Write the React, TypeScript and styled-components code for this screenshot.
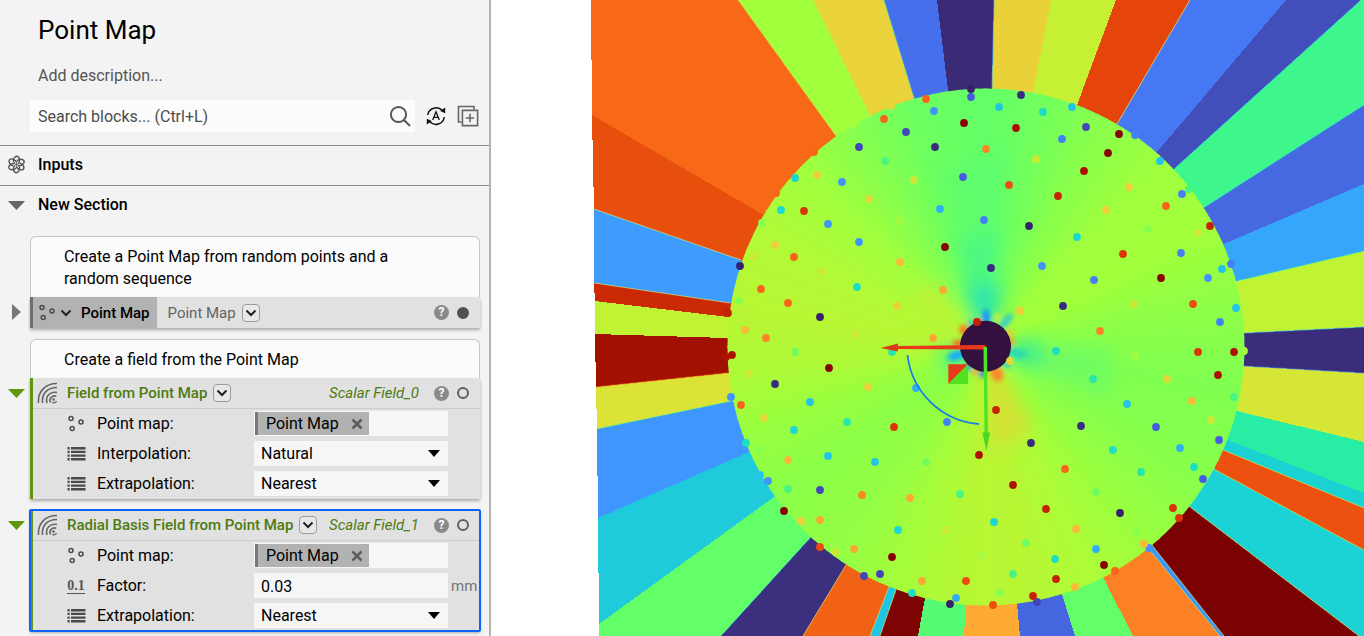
import React, { useId } from "react";
import styled, { createGlobalStyle, css } from "styled-components";

const GlobalStyle = createGlobalStyle`
  *, *::before, *::after { box-sizing: border-box; }
  body {
    margin: 0;
    background: #ffffff;
    color: #000000;
    font: 400 16px/22px Roboto, "Liberation Sans", sans-serif;
  }
  input, select, button { font: inherit; color: inherit; }
`;

/* ---------- Notebook panel ---------- */

const Page = styled.div`
  display: flex;
  min-height: 100vh;
`;

const Panel = styled.aside`
  flex: 0 0 36%;
  min-width: 440px;
  background: #f3f3f3;
  border-right: 2px solid #b4b4b4;
`;

const PanelHead = styled.header`
  display: flex;
  flex-direction: column;
  padding: 13px 10px 13px 30px;
  border-bottom: 1px solid #8c8c8c;
`;

const Title = styled.h1`
  margin: 0;
  padding-left: 8px;
  font-size: 26px;
  line-height: 34px;
  font-weight: 400;
`;

const Description = styled.input`
  margin-top: 16px;
  padding: 0 8px;
  height: 24px;
  border: 0;
  background: transparent;
  &::placeholder { color: #555555; opacity: 1; }
`;

const SearchRow = styled.div`
  display: flex;
  align-items: center;
  gap: 10px;
  margin-top: 13px;
`;

const SearchBox = styled.label`
  display: flex;
  align-items: center;
  flex: 1;
  height: 32px;
  padding: 0 4px 0 8px;
  background: #fcfcfc;
`;

const SearchInput = styled.input`
  flex: 1;
  min-width: 0;
  padding: 2px 0 0;
  border: 0;
  background: transparent;
  &::placeholder { color: #4c4c4c; opacity: 1; }
`;

const IconButton = styled.button`
  display: flex;
  flex-shrink: 0;
  padding: 0;
  border: 0;
  background: transparent;
  cursor: pointer;
`;

const SectionHead = styled.h2<{ $ruled?: boolean }>`
  display: flex;
  align-items: center;
  gap: 13px;
  height: ${(p) => (p.$ruled ? 40 : 38)}px;
  margin: 0;
  padding: 0 8px ${(p) => (p.$ruled ? 2 : 0)}px;
  font-size: 16px;
  font-weight: 500;
  border-bottom: ${(p) => (p.$ruled ? "1px solid #8c8c8c" : "0")};
`;

const BlockList = styled.div`
  display: flex;
  flex-direction: column;
  gap: 11px;
  padding: 12px 9px 4px 30px;
`;

const Comment = styled.p`
  margin: 0;
  padding: 9px 60px 7px 33px;
  border: 1px solid #c6c6c6;
  border-bottom: 0;
  border-radius: 6px 6px 0 0;
  background: #fbfbfb;
`;

const BlockRow = styled.div`
  display: flex;
  align-items: flex-start;
  margin-left: -22px;
`;

const Toggle = styled(IconButton)`
  flex: 0 0 22px;
  height: 30px;
  align-items: center;
`;

type Tone = "grey" | "green";

const Card = styled.div<{ $tone: Tone; $selected?: boolean }>`
  flex: 1;
  min-width: 0;
  background: #e1e1e1;
  border-left: 3px solid ${(p) => (p.$tone === "green" ? "#5f960a" : "#6e6e6e")};
  box-shadow: 0 2px 3px rgba(0, 0, 0, 0.3);
  ${(p) =>
    p.$selected &&
    css`
      outline: 2px solid #0a64fa;
      outline-offset: -1px;
      border-radius: 1px;
    `}
`;

const CardHead = styled.div<{ $ruled?: boolean }>`
  display: flex;
  align-items: center;
  height: 31px;
  padding-right: 11px;
  font-size: 15px;
  border-bottom: ${(p) => (p.$ruled ? "1px solid #cccccc" : "0")};
`;

const Handle = styled.span`
  display: flex;
  align-items: center;
  align-self: stretch;
  gap: 4px;
  margin-right: 11px;
  padding: 0 7px 0 5px;
  background: #b2b2b2;
  font-weight: 500;
`;

const HandleName = styled.span`
  margin-left: 5px;
  white-space: nowrap;
`;

const BlockName = styled.span<{ $tone: Tone }>`
  white-space: nowrap;
  color: ${(p) => (p.$tone === "green" ? "#4e7a12" : "#646464")};
  font-weight: ${(p) => (p.$tone === "green" ? 500 : 400)};
`;

const MenuButton = styled(IconButton)`
  align-items: center;
  justify-content: center;
  width: 18px;
  height: 18px;
  margin-left: 6px;
  border: 1px solid #9c9c9c;
  border-radius: 4px;
  background: #e8e8e8;
`;

const Output = styled.em`
  margin-left: auto;
  color: #4e7a12;
  white-space: nowrap;
`;

const Status = styled.span<{ $push?: boolean }>`
  display: flex;
  align-items: center;
  gap: 8px;
  margin-left: ${(p) => (p.$push ? "auto" : "15px")};
`;

const Fields = styled.div`
  display: flex;
  flex-direction: column;
`;

const FieldRow = styled.div`
  display: flex;
  align-items: center;
  height: 30px;
  padding: 0 0 1px 34px;
`;

const FieldIcon = styled.span`
  display: flex;
  flex: 0 0 30px;
`;

const FieldLabel = styled.label`
  flex: 0 0 157px;
`;

const FieldBox = styled.div`
  position: relative;
  display: flex;
  align-items: center;
  flex: 1;
  min-width: 0;
  height: 25px;
  background: #f6f6f6;
`;

const Unit = styled.span`
  flex: 0 0 32px;
  padding-left: 3px;
  color: #777777;
  font-size: 15px;
`;

const Select = styled.select`
  appearance: none;
  width: 100%;
  height: 25px;
  padding: 1px 24px 0 7px;
  border: 0;
  border-radius: 0;
  background: transparent;
`;

const SelectArrow = styled.svg`
  position: absolute;
  right: 8px;
  pointer-events: none;
`;

const NumberInput = styled.input`
  width: 100%;
  height: 25px;
  padding: 1px 7px 0;
  border: 0;
  background: transparent;
`;

const Chip = styled.span`
  display: flex;
  align-items: center;
  gap: 12px;
  height: 23px;
  margin-left: 1px;
  padding: 1px 6px 0 8px;
  border-left: 3px solid #787878;
  background: #b2b2b2;
`;

/* ---------- Icons ---------- */

const SearchIcon = () => (
  <svg width="22" height="22" viewBox="0 0 22 22" fill="none" stroke="#555" strokeWidth="2">
    <circle cx="9.5" cy="9.5" r="7.600" />
    <path d="M15 15l6 6" />
  </svg>
);

const AutoIcon = () => (
  <svg width="22" height="22" viewBox="0 0 22 22" fill="none" stroke="#111" strokeWidth="1.500">
    <path d="M2.700 10A8.500 8.500 0 0 1 17.400 5.600M19.300 12A8.500 8.500 0 0 1 4.600 16.600" />
    <path d="M20.200 2.400v5.800l-5-2.200zM1.800 19.600v-5.800l5 2.200z" fill="#111" stroke="none" />
    <path d="M7.700 15L11 6.800l3.300 8.200M8.800 12.300h4.400" strokeWidth="1.300" />
  </svg>
);

const AddBlockIcon = () => (
  <svg width="22" height="22" viewBox="0 0 22 22" fill="none" stroke="#666" strokeWidth="1.600">
    <path d="M4.500 17H1.500V1.500H17V4.500" />
    <path d="M5.400 5.400H20.600V20.600H5.400zM13 8.800v8.400M8.800 13h8.400" />
  </svg>
);

const InputsIcon = () => (
  <svg width="17" height="19" viewBox="-9 -10 18 20" fill="none" stroke="#505050" strokeWidth="1.500">
    {[0, 60, 120, 180, 240, 300].map((a) => (
      <path key={a} d="M-3.200 -2.500C-3.800 -6.500 -1.500 -9 0.800 -8.800C3.600 -8.200 3.600 -4 2.200 -0.500" transform={`rotate(${a})`} />
    ))}
    <circle r="1.300" fill="#505050" stroke="none" />
  </svg>
);

const DownTriangle = ({ color }: { color: string }) => (
  <svg width="17" height="9" viewBox="0 0 17 9">
    <path d="M0 0H17L8.500 9z" fill={color} />
  </svg>
);

const RightTriangle = () => (
  <svg width="17" height="16" viewBox="0 0 17 16">
    <path d="M4 0L13 8 4 16z" fill="#777" />
  </svg>
);

const PointsIcon = () => (
  <svg width="18" height="18" viewBox="0 0 18 18" fill="none" stroke="#4a4a4a" strokeWidth="1.500">
    <circle cx="4" cy="3.400" r="2" />
    <circle cx="14" cy="7" r="2" />
    <circle cx="5.200" cy="13.600" r="2" />
  </svg>
);

const Chevron = () => (
  <svg width="12" height="8" viewBox="0 0 12 8" fill="none" stroke="#222" strokeWidth="2">
    <path d="M1.500 1.500L6 6l4.500-4.500" />
  </svg>
);

const FieldWaveIcon = () => (
  <svg width="22" height="22" viewBox="0 0 22 22" fill="none" stroke="#666" strokeWidth="1.600">
    <path d="M1.500 21C0.500 10 8 1.500 20 1.500M5.500 21C4.500 12 10 5.500 20 5.500" />
    <path d="M10 21C8 14.500 13 9 20 10.500M13.500 20.500C11.500 16.500 15.500 12.800 19.300 14.300" />
    <circle cx="16.600" cy="17.600" r="1.300" fill="#666" stroke="none" />
    <path d="M15 20.500c2 1 4 0 4.500-1.500" strokeWidth="1.200" />
  </svg>
);

const ListIcon = () => (
  <svg width="19" height="14" viewBox="0 0 19 14" fill="#4a4a4a">
    {[0, 3.7, 7.4, 11].map((y) => (
      <path key={y} d={`M0.500 ${y}h2.200v2.400h-2.200zM4 ${y}h14.500v2.400h-14.500z`} />
    ))}
  </svg>
);

const DecimalGlyph = styled.span`
  width: 18px;
  border-bottom: 1px solid #555555;
  color: #555555;
  font: 700 14px/15px "Liberation Serif", serif;
  text-align: center;
`;

const HelpBadge = styled.button`
  width: 15px;
  height: 15px;
  padding: 0;
  border: 0;
  border-radius: 50%;
  background: #8a8a8a;
  && { color: #ffffff; font-size: 12px; font-weight: 700; line-height: 15px; }
`;

const Dot = styled.span<{ $filled?: boolean }>`
  width: 12px;
  height: 12px;
  border: 2px solid ${(p) => (p.$filled ? "#505050" : "#606060")};
  border-radius: 50%;
  background: ${(p) => (p.$filled ? "#505050" : "transparent")};
`;

const CloseIcon = () => (
  <svg width="12" height="12" viewBox="0 0 12 12" stroke="#5c5c5c" strokeWidth="2.500">
    <path d="M1.500 1.500l9 9M10.500 1.500l-9 9" />
  </svg>
);

/* ---------- Block parts ---------- */

function StatusIcons({ filled, push }: { filled?: boolean; push?: boolean }) {
  return (
    <Status $push={push}>
      <HelpBadge aria-label="Help">?</HelpBadge>
      <Dot $filled={filled} />
    </Status>
  );
}

function PointMapField() {
  const id = useId();
  return (
    <FieldRow role="group" aria-labelledby={id}>
      <FieldIcon><PointsIcon /></FieldIcon>
      <FieldLabel as="span" id={id}>Point map:</FieldLabel>
      <FieldBox>
        <Chip>
          Point Map
          <IconButton aria-label="Remove Point Map"><CloseIcon /></IconButton>
        </Chip>
      </FieldBox>
      <Unit />
    </FieldRow>
  );
}

function SelectField({ label, options }: { label: string; options: string[] }) {
  const id = useId();
  return (
    <FieldRow>
      <FieldIcon><ListIcon /></FieldIcon>
      <FieldLabel htmlFor={id}>{label}</FieldLabel>
      <FieldBox>
        <Select id={id}>
          {options.map((o) => <option key={o}>{o}</option>)}
        </Select>
        <SelectArrow width="12" height="7" viewBox="0 0 12 7">
          <path d="M0 0H12L6 7z" />
        </SelectArrow>
      </FieldBox>
      <Unit />
    </FieldRow>
  );
}

function NumberField({ label, value, unit }: { label: string; value: string; unit: string }) {
  const id = useId();
  return (
    <FieldRow>
      <FieldIcon><DecimalGlyph>0.1</DecimalGlyph></FieldIcon>
      <FieldLabel htmlFor={id}>{label}</FieldLabel>
      <FieldBox><NumberInput id={id} defaultValue={value} /></FieldBox>
      <Unit>{unit}</Unit>
    </FieldRow>
  );
}

const WaveSlot = styled.span`
  display: flex;
  flex: 0 0 34px;
  padding-left: 4px;
`;

interface FieldBlockProps {
  name: string;
  output: string;
  selected?: boolean;
  children: React.ReactNode;
}

function FieldBlock({ name, output, selected, children }: FieldBlockProps) {
  return (
    <BlockRow>
      <Toggle aria-label="Collapse"><DownTriangle color="#5f960a" /></Toggle>
      <Card $tone="green" $selected={selected}>
        <CardHead $ruled>
          <WaveSlot><FieldWaveIcon /></WaveSlot>
          <BlockName $tone="green">{name}</BlockName>
          <MenuButton aria-label="Overloads"><Chevron /></MenuButton>
          <Output>{output}</Output>
          <StatusIcons />
        </CardHead>
        <Fields>{children}</Fields>
      </Card>
    </BlockRow>
  );
}

/* ---------- Viewport ---------- */

const Viewport = styled.main`
  flex: 1;
  min-width: 0;
  height: 100vh;
  background: #ffffff;
`;

const Scene = styled.svg`
  display: block;
  width: 100%;
  height: 100%;
`;

const CX = 986;
const CY = 347;
const R = 258.5;

/* Each entry: inner x, y, outer x, y of a cell border, then the colour of the cell clockwise of it. */
type Border = [number, number, number, number, string];
const BORDERS: Border[] = [
  [836, 136, 738, 0, "#a2ff3c"],
  [870, 115, 813, 0, "#e9d23a"],
  [914, 98, 884, 0, "#466fec"],
  [948, 90, 937, 0, "#3b2a76"],
  [992, 88, 994, 0, "#ead13a"],
  [1033, 93, 1051, 0, "#c6f034"],
  [1077, 105, 1116, 0, "#e5450b"],
  [1117, 124, 1190, 0, "#4678f4"],
  [1157, 152, 1286, 0, "#424eba"],
  [1174, 169, 1361, 0, "#3ef78c"],
  [1205, 207, 1364, 105, "#4669e2"],
  [1224, 244, 1364, 184, "#35a6f9"],
  [1237, 281, 1364, 251, "#c0f334"],
  [1244, 333, 1364, 327, "#3c2c7c"],
  [1244, 366, 1364, 373, "#d5e635"],
  [1237, 411, 1364, 442, "#27eea4"],
  [1225, 439, 1364, 493, "#1bd2d3"],
  [1223, 450, 1364, 508, "#ec5110"],
  [1214, 469, 1364, 550, "#1bd3d5"],
  [1190, 507, 1359, 636, "#7a0202"],
  [1152, 545, 1224, 636, "#3c98f8"],
  [1148, 548, 1220, 636, "#fc8124"],
  [1103, 577, 1133, 636, "#62ff68"],
  [1062, 594, 1075, 636, "#4666e0"],
  [1017, 603, 1020, 636, "#feaa33"],
  [966, 603, 964, 636, "#56fb74"],
  [925, 598, 918, 636, "#7e0303"],
  [896, 590, 880, 636, "#1fc5e2"],
  [889, 587, 870, 636, "#f16214"],
  [846, 565, 803, 636, "#3c2f7e"],
  [811, 537, 721, 636, "#62ff68"],
  [774, 497, 599, 624, "#1fcada"],
  [749, 452, 598, 518, "#4096ff"],
  [732, 401, 597, 429, "#dbe336"],
  [727, 373, 596, 387, "#a21002"],
  [726, 338, 595, 334, "#c0f334"],
  [728, 317, 595, 301, "#cb2904"],
  [730, 303, 594, 283, "#3d9cfe"],
  [741, 260, 594, 209, "#e84f0d"],
  [762, 214, 592, 115, "#f76817"],
];

/* Corner points that a cell also covers, by index of its first border. */
const CORNERS: Record<number, string> = {
  9: "1364,0",
  18: "1364,550 1364,636",
  30: "599,636",
  39: "591,0",
};

/* Borders where the renderer leaves a thin contrasting fringe. */
const FRINGES: [number, string][] = [
  [0, "#e8c03a"], [2, "#4fe0b0"], [4, "#38b0e0"], [7, "#d8f080"], [9, "#30c8e8"], [10, "#30d0d8"],
  [12, "#40e8b0"], [13, "#48c8e0"], [14, "#4080f0"], [17, "#d8e050"], [18, "#d8e050"],
  [19, "#e8e060"], [20, "#c8e070"], [21, "#c8e070"], [29, "#e8e070"], [30, "#30b8e0"],
  [27, "#d8e060"], [28, "#d8e060"], [33, "#50e8a0"], [34, "#f08020"], [37, "#d8e070"], [38, "#c8e890"],
];

/* Field colour by bearing, clockwise from straight up. */
const SWEEP: [number, number[]][] = [
  [0, [98, 255, 104]], [12, [112, 255, 94]], [25, [134, 255, 78]], [42, [158, 255, 62]],
  [62, [162, 255, 58]], [80, [142, 255, 72]], [100, [128, 255, 80]], [122, [136, 255, 76]],
  [140, [154, 255, 64]], [155, [172, 252, 56]], [170, [184, 246, 52]], [185, [182, 247, 52]],
  [200, [166, 252, 58]], [215, [148, 255, 68]], [235, [140, 255, 72]], [250, [152, 255, 64]],
  [262, [172, 251, 56]], [278, [184, 246, 52]], [296, [178, 250, 54]], [315, [160, 255, 62]],
  [330, [132, 255, 80]], [342, [110, 255, 94]], [360, [98, 255, 104]],
];

function sweepColor(deg: number) {
  const i = SWEEP.findIndex(([a], k) => k > 0 && deg <= a);
  const [a0, c0] = SWEEP[i - 1];
  const [a1, c1] = SWEEP[i];
  const t = (deg - a0) / (a1 - a0);
  return `rgb(${c0.map((v, k) => Math.round(v + (c1[k] - v) * t)).join(",")})`;
}

function polar(deg: number, r: number) {
  const a = (deg * Math.PI) / 180;
  return `${(CX + Math.sin(a) * r).toFixed(2)},${(CY - Math.cos(a) * r).toFixed(2)}`;
}

/* Sample points grouped by colour. */
const POINTS: Record<string, [number, number][]> = {
  "#36226a": [[971, 89], [740, 266], [820, 317], [1029, 226], [1120, 513], [950, 604]],
  "#3b2b80": [[935, 147], [1021, 95], [991, 268], [1063, 306], [775, 384], [1081, 426], [1031, 443]],
  "#4246b8": [[859, 147], [906, 132], [1086, 127], [820, 490], [864, 576], [880, 574], [1037, 602]],
  "#465cde": [[971, 97], [963, 177], [1156, 427], [1219, 440], [1203, 479]],
  "#4480f6": [[1062, 139], [1135, 135], [1182, 194], [984, 220], [1181, 253], [1231, 264], [1094, 280], [947, 422], [1220, 322]],
  "#4094fb": [[934, 111], [842, 182], [828, 224], [859, 242], [1042, 266], [1208, 278], [731, 397], [768, 481], [1149, 548]],
  "#30aef4": [[940, 209], [916, 388], [1180, 448], [1096, 549], [956, 598]],
  "#24c4e4": [[999, 107], [1072, 107], [1160, 161], [1222, 269], [1236, 308], [810, 402], [828, 456], [875, 462], [760, 475], [1127, 404]],
  "#1cd6d2": [[795, 178], [781, 210], [1077, 237], [794, 430], [898, 530], [994, 522]],
  "#1edec2": [[857, 287], [1043, 112], [746, 443], [1056, 351], [1113, 450], [1194, 467], [1055, 559], [912, 593]],
  "#2ae6ac": [[847, 422], [1093, 379], [1141, 472], [892, 352]],
  "#4af482": [[885, 161], [1189, 189], [788, 489], [960, 494], [1234, 397], [1013, 574]],
  "#70fb5e": [[795, 352], [926, 462], [1026, 543], [1096, 492]],
  "#86ff4e": [[762, 223], [739, 301], [760, 449], [1148, 229], [1168, 329], [1045, 397], [1137, 531], [1000, 593]],
  "#a4fa3e": [[899, 221], [853, 125], [981, 555], [1135, 355], [1244, 351]],
  "#cbe834": [[914, 180], [754, 257], [822, 271], [1036, 159], [1198, 233], [1134, 304], [856, 334], [749, 374], [946, 530], [836, 552], [1211, 420]],
  "#e2d838": [[869, 199], [764, 418], [1010, 361], [1167, 379], [891, 106]],
  "#eecf3a": [[817, 175], [775, 245], [897, 306], [1129, 187], [1106, 210], [1020, 311], [868, 387], [801, 521]],
  "#f8ba38": [[900, 262], [745, 330], [788, 460], [1192, 401], [1076, 529], [1144, 544], [1075, 587]],
  "#fba836": [[943, 290], [933, 338], [910, 498], [820, 520], [854, 549], [922, 581]],
  "#fc8626": [[986, 149], [766, 338], [862, 495], [1100, 331]],
  "#fa641a": [[926, 99], [884, 119], [794, 257], [761, 289], [788, 303], [814, 152], [776, 193], [1166, 206], [741, 405], [1065, 469], [1115, 571]],
  "#ee4c10": [[1009, 185], [1193, 304], [820, 547], [966, 581], [993, 605]],
  "#da3408": [[804, 211], [1123, 254], [1198, 352], [1173, 508], [1179, 518], [894, 427]],
  "#c42404": [[728, 313], [1058, 196], [1210, 226], [977, 322], [996, 410], [1046, 509], [1056, 579], [1033, 596]],
  "#ac1202": [[1016, 128], [1084, 171], [732, 355], [726, 357], [1218, 375], [1234, 352], [979, 455], [1013, 485]],
  "#880404": [[964, 123], [945, 247], [1119, 134], [1108, 153], [1161, 278], [829, 368], [784, 511], [892, 557], [1104, 565]],
};

/* Colour flares round the core: bearing, distance, half length, half width, colour, opacity. */
const FLARES: [number, number, number, number, string, number][] = [
  [0, 29, 9, 4, "#1090ff", 0.9],
  [38, 33, 10, 4, "#18c0e8", 0.7],
  [60, 27, 4, 4, "#f8c030", 0.8],
  [78, 26, 4, 4, "#ffa030", 0.8],
  [20, 31, 6, 3, "#d8e838", 0.8],
  [102, 32, 10, 5, "#20d0c8", 0.7],
  [130, 27, 4, 4, "#20c0e0", 0.7],
  [158, 29, 8, 6, "#ff8028", 0.9],
  [188, 27, 4, 3, "#1080ff", 0.9],
  [204, 27, 4, 3, "#ff9030", 0.8],
  [222, 27, 4, 4, "#1090ff", 0.8],
  [254, 30, 10, 5, "#10a8ff", 0.9],
  [278, 27, 7, 3, "#ff5818", 0.9],
  [308, 28, 5, 5, "#ff7020", 0.9],
  [328, 27, 4, 3, "#18b0e8", 0.8],
  [344, 27, 4, 3, "#ffa030", 0.6],
];

function FieldScene() {
  return (
    <Scene viewBox="491 0 873 636" preserveAspectRatio="xMidYMid slice" role="img" aria-label="Point map field">
      <defs>
        <filter id="wide" x="-50%" y="-50%" width="200%" height="200%"><feGaussianBlur stdDeviation="9" /></filter>
        <filter id="tight" x="-50%" y="-50%" width="200%" height="200%"><feGaussianBlur stdDeviation="2" /></filter>
        <clipPath id="disc"><circle cx={CX} cy={CY} r={R} /></clipPath>
      </defs>

      <g shapeRendering="crispEdges">
        {BORDERS.map(([ix, iy, ox, oy, fill], i) => {
          const next = BORDERS[(i + 1) % BORDERS.length];
          return (
            <polygon
              key={i}
              fill={fill}
              points={`${CX},${CY} ${ix},${iy} ${ox},${oy} ${CORNERS[i] ?? ""} ${next[2]},${next[3]} ${next[0]},${next[1]}`}
            />
          );
        })}
        <g clipPath="url(#disc)">
          {Array.from({ length: 180 }, (_, i) => (
            <polygon
              key={i}
              fill={sweepColor(i * 2 + 1)}
              points={`${CX},${CY} ${polar(i * 2 - 0.2, R + 4)} ${polar(i * 2 + 2.2, R + 4)}`}
            />
          ))}
        </g>
      </g>
      {FRINGES.map(([i, color]) => {
        const [x1, y1, x2, y2] = BORDERS[i];
        return <line key={i} x1={x1} y1={y1} x2={x2} y2={y2} stroke={color} opacity="0.700" />;
      })}

      <g filter="url(#wide)">
        <path d="M986 347L940 170 1010 150z" fill="#58fb78" opacity="0.450" />
        <path d="M986 347L956 240 1000 230z" fill="#40f590" opacity="0.600" />
        <path d="M986 340L966 286 1002 286z" fill="#20dcc0" opacity="0.800" />
        <path d="M986 347L1110 346 1110 400z" fill="#60fa70" opacity="0.550" />
        <path d="M986 347L1040 340 1042 370z" fill="#28e8a8" opacity="0.750" />
        <path d="M986 347L938 348 944 372z" fill="#30f0a0" opacity="0.800" />
        <path d="M986 347L992 450 1034 430z" fill="#dcdc34" opacity="0.800" />
        <path d="M986 347L910 300 930 280z" fill="#d0ea34" opacity="0.600" />
      </g>
      <g filter="url(#tight)">
        {FLARES.map(([deg, dist, len, wid, color, opacity]) => (
          <ellipse
            key={deg}
            rx={wid}
            ry={len}
            fill={color}
            opacity={opacity}
            transform={`translate(${polar(deg, dist)}) rotate(${deg})`}
          />
        ))}
      </g>

      <circle cx="985.500" cy="346.300" r="25.500" fill="#34103f" />
      {Object.entries(POINTS).map(([color, list]) => (
        <g key={color} fill={color}>
          {list.map(([x, y]) => <circle key={`${x}-${y}`} cx={x} cy={y} r="3.900" />)}
        </g>
      ))}

      <path d="M985.500 345L898 346v3l87.500 0.500z" fill="#e8391a" />
      <path d="M880.500 348L898 343.500v8z" fill="#dc3c1c" />
      <path d="M983.500 347h3.500l1 88h-3.500z" fill="#48e624" />
      <path d="M982.300 432.500h7.700l-3.500 18.500z" fill="#48d824" />
      <path d="M948.300 364.300H968L948.300 384z" fill="#e8391a" />
      <path d="M968 364.300V384H948.300z" fill="#50e01e" />
      <path d="M907.500 355A78 78 0 0 0 979 424" fill="none" stroke="#1e7de0" strokeWidth="1.800" />
    </Scene>
  );
}

/* ---------- Page ---------- */

export default function App() {
  return (
    <Page>
      <GlobalStyle />
      <Panel>
        <PanelHead>
          <Title>Point Map</Title>
          <Description aria-label="Description" placeholder="Add description..." />
          <SearchRow>
            <SearchBox>
              <SearchInput aria-label="Search blocks" placeholder="Search blocks... (Ctrl+L)" />
              <SearchIcon />
            </SearchBox>
            <IconButton aria-label="Auto run"><AutoIcon /></IconButton>
            <IconButton aria-label="Add block"><AddBlockIcon /></IconButton>
          </SearchRow>
        </PanelHead>
        <SectionHead $ruled><InputsIcon />Inputs</SectionHead>
        <SectionHead><DownTriangle color="#666666" />New Section</SectionHead>
        <BlockList>
          <section>
            <Comment>Create a Point Map from random points and a random sequence</Comment>
            <BlockRow>
              <Toggle aria-label="Expand"><RightTriangle /></Toggle>
              <Card $tone="grey">
                <CardHead>
                  <Handle>
                    <PointsIcon />
                    <Chevron />
                    <HandleName>Point Map</HandleName>
                  </Handle>
                  <BlockName $tone="grey">Point Map</BlockName>
                  <MenuButton aria-label="Overloads"><Chevron /></MenuButton>
                  <StatusIcons filled push />
                </CardHead>
              </Card>
            </BlockRow>
          </section>
          <section>
            <Comment>Create a field from the Point Map</Comment>
            <FieldBlock name="Field from Point Map" output="Scalar Field_0">
              <PointMapField />
              <SelectField label="Interpolation:" options={["Natural", "Linear", "Nearest"]} />
              <SelectField label="Extrapolation:" options={["Nearest", "Linear"]} />
            </FieldBlock>
          </section>
          <FieldBlock name="Radial Basis Field from Point Map" output="Scalar Field_1" selected>
            <PointMapField />
            <NumberField label="Factor:" value="0.03" unit="mm" />
            <SelectField label="Extrapolation:" options={["Nearest", "Linear"]} />
          </FieldBlock>
        </BlockList>
      </Panel>
      <Viewport><FieldScene /></Viewport>
    </Page>
  );
}
